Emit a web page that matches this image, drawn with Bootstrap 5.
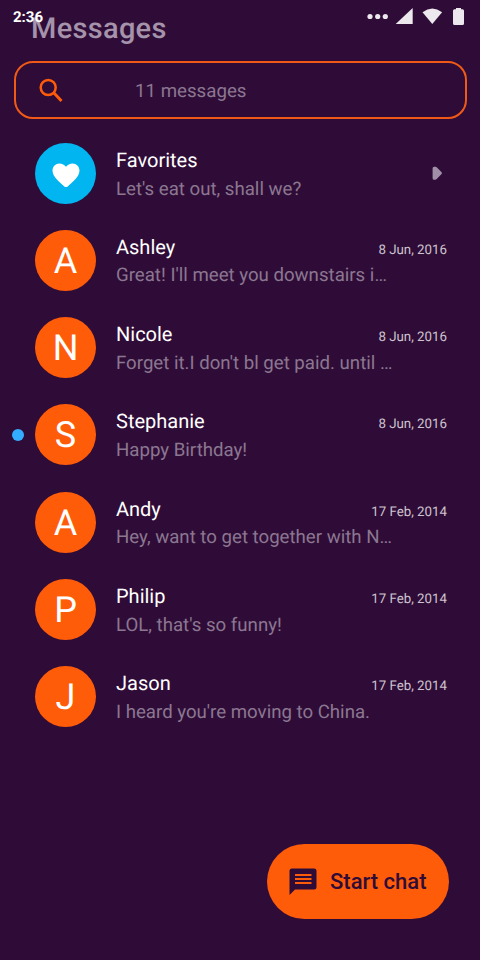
<!DOCTYPE html>
<html lang="en">
<head>
<meta charset="utf-8">
<meta name="viewport" content="width=device-width, initial-scale=1">
<title>Messages</title>
<link href="https://cdn.jsdelivr.net/npm/bootstrap@5.3.0/dist/css/bootstrap.min.css" rel="stylesheet">
<style>
  :root { --plum: #2f0c37; --flame: #ff5c0a; }
  body { background: var(--plum); font-family: Roboto, "Liberation Sans", sans-serif; color: #fff; text-rendering: geometricPrecision; }
  .screen { width: 480px; height: 960px; }
  .app-header { height: 61px; }
  .app-title { padding: 8px 0 0 31px; font-size: 29px; font-weight: 500; line-height: 42px; letter-spacing: .3px; color: #a593ab; }
  .status-bar { top: 0; left: 0; height: 34px; padding: 0 15px 0 13px; }
  .clock { font-size: 15px; font-weight: 700; line-height: 36px; }
  .search-box { height: 58px; margin: 0 13px 0 14px; border: 2px solid #f05a16; border-radius: 19px; padding-left: 23px; }
  .search-label { margin-left: 71px; padding-top: 2px; font-size: 18.7px; color: #8b7791; }
  .thread-list { padding-top: 12px; }
  .thread { height: 87.3px; padding: 0 33px 0 35px; }
  .thread.favorites { height: 85.6px; }
  .avatar { width: 61px; height: 61px; margin-right: 20px; background: var(--flame); font-size: 36px; line-height: 62px; }
  .favorites .avatar { background: #00b5f0; }
  .thread-text { padding-top: 3px; }
  .thread-name { font-size: 20px; line-height: 27.6px; }
  .preview { font-size: 18.65px; line-height: 28.4px; color: #8b7791; }
  .thread-date { font-size: 13.3px; color: #cdc3cf; }
  .unread { left: 12px; top: 38px; width: 12px; height: 12px; background: #33adff; }
  .start-chat { right: 31px; bottom: 41px; width: 182px; height: 75px; padding: 0 0 0 22px; background: var(--flame); color: var(--plum); font-size: 22px; font-weight: 500; letter-spacing: 0; }
  .start-chat span { margin-left: 13px; }
  .start-chat:hover { background: var(--flame); color: var(--plum); }
</style>
</head>
<body>
<main class="screen position-relative overflow-hidden">
  <header class="app-header">
    <h1 class="app-title m-0">Messages</h1>
    <div class="status-bar position-absolute w-100 d-flex justify-content-between align-items-center">
      <span class="clock">2:36</span>
      <svg width="98" height="20" viewBox="367 7 98 20" fill="#ece8ed" aria-hidden="true">
        <circle cx="370" cy="16.500" r="2.600"/><circle cx="377.700" cy="16.500" r="2.600"/><circle cx="385.300" cy="16.500" r="2.600"/>
        <path d="M412.700 8v16h-17z"/>
        <path d="M432.300 24 422.500 12.200q9.800-7.400 19.600 0z"/>
        <path d="M456 8h5v1.300h1.500q1.500 0 1.500 1.500V23.500q0 1.500-1.500 1.500h-8q-1.500 0-1.500-1.500V10.800q0-1.500 1.500-1.500h1.500z"/>
      </svg>
    </div>
  </header>

  <div class="search-box d-flex align-items-center">
    <svg width="25" height="25" viewBox="0 0 25 25" fill="none" stroke="#ff5c0a" aria-hidden="true">
      <circle cx="9.200" cy="9.500" r="7.500" stroke-width="2.500"/><path d="M14.500 14.500 22.500 23" stroke-width="2.900"/>
    </svg>
    <span class="search-label">11 messages</span>
  </div>

  <section class="thread-list">
    <div class="thread favorites d-flex align-items-center">
      <div class="avatar rounded-circle d-flex align-items-center justify-content-center flex-shrink-0">
        <svg width="28" height="26" viewBox="0 0 29 27" fill="#fff" aria-hidden="true"><path d="M14.500 28C8 22 .5 16.500.5 9.800.5 5.500 3.700 2.500 7.700 2.500c2.700 0 5.300 1.300 6.800 3.500 1.500-2.200 4.100-3.500 6.800-3.500 4 0 7.200 3 7.200 7.300C28.500 16.500 21 22 14.500 28z"/></svg>
      </div>
      <div class="thread-text flex-grow-1"><div class="thread-name">Favorites</div><div class="preview">Let's eat out, shall we?</div></div>
      <svg width="15" height="15" viewBox="0 0 15 15" fill="#a18ea7" aria-hidden="true"><path d="M.6 2.200Q.6.700 2.100.7h1.200q.8 0 1.400.6l4.900 5q.8.900 0 1.800l-4.900 5q-.6.700-1.400.7H2.100Q.6 13.800.6 12.300z"/></svg>
    </div>
    <div class="thread d-flex align-items-center">
      <div class="avatar rounded-circle text-center flex-shrink-0">A</div>
      <div class="thread-text flex-grow-1 text-nowrap"><div class="d-flex justify-content-between align-items-baseline"><span class="thread-name">Ashley</span><span class="thread-date">8 Jun, 2016</span></div><div class="preview">Great! I'll meet you downstairs i…</div></div>
    </div>
    <div class="thread d-flex align-items-center">
      <div class="avatar rounded-circle text-center flex-shrink-0">N</div>
      <div class="thread-text flex-grow-1 text-nowrap"><div class="d-flex justify-content-between align-items-baseline"><span class="thread-name">Nicole</span><span class="thread-date">8 Jun, 2016</span></div><div class="preview">Forget it.I don't bl get paid. until …</div></div>
    </div>
    <div class="thread d-flex align-items-center position-relative">
      <span class="unread position-absolute rounded-circle"></span>
      <div class="avatar rounded-circle text-center flex-shrink-0">S</div>
      <div class="thread-text flex-grow-1 text-nowrap"><div class="d-flex justify-content-between align-items-baseline"><span class="thread-name">Stephanie</span><span class="thread-date">8 Jun, 2016</span></div><div class="preview">Happy Birthday!</div></div>
    </div>
    <div class="thread d-flex align-items-center">
      <div class="avatar rounded-circle text-center flex-shrink-0">A</div>
      <div class="thread-text flex-grow-1 text-nowrap"><div class="d-flex justify-content-between align-items-baseline"><span class="thread-name">Andy</span><span class="thread-date">17 Feb, 2014</span></div><div class="preview">Hey, want to get together with N…</div></div>
    </div>
    <div class="thread d-flex align-items-center">
      <div class="avatar rounded-circle text-center flex-shrink-0">P</div>
      <div class="thread-text flex-grow-1 text-nowrap"><div class="d-flex justify-content-between align-items-baseline"><span class="thread-name">Philip</span><span class="thread-date">17 Feb, 2014</span></div><div class="preview">LOL, that's so funny!</div></div>
    </div>
    <div class="thread d-flex align-items-center">
      <div class="avatar rounded-circle text-center flex-shrink-0">J</div>
      <div class="thread-text flex-grow-1 text-nowrap"><div class="d-flex justify-content-between align-items-baseline"><span class="thread-name">Jason</span><span class="thread-date">17 Feb, 2014</span></div><div class="preview">I heard you're moving to China.</div></div>
    </div>
  </section>

  <button type="button" class="start-chat btn border-0 rounded-pill position-absolute d-flex align-items-center">
    <svg width="28" height="27" viewBox="0 0 28 27" aria-hidden="true"><path d="M3 .5h22Q27.500.5 27.500 3v16q0 2.500-2.500 2.500H6L.5 27V3Q.5.500 3 .5z" fill="#2f0c37"/><path d="M6 7h16.500M6 11h16.500M6 15h16.500" stroke="#ff5c0a" stroke-width="2.200"/></svg>
    <span class="text-nowrap">Start chat</span>
  </button>
</main>
<script src="https://cdn.jsdelivr.net/npm/bootstrap@5.3.0/dist/js/bootstrap.bundle.min.js"></script>
</body>
</html>
